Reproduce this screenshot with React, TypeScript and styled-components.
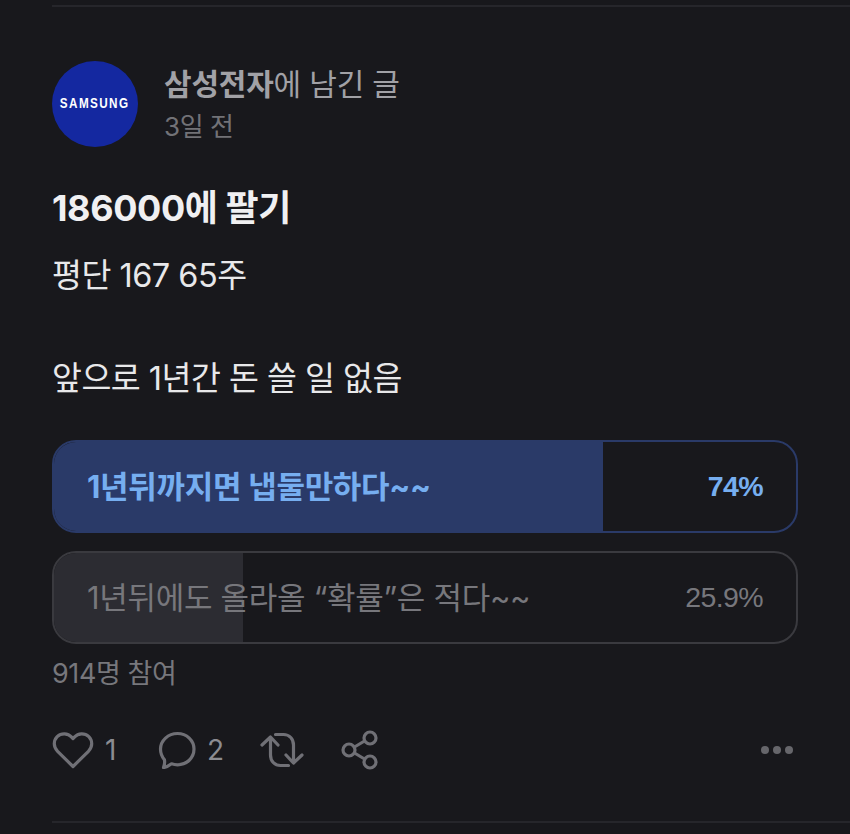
import React, { FC } from 'react';
import styled, { createGlobalStyle } from 'styled-components';

const GlobalStyle = createGlobalStyle`
  html, body {
    margin: 0;
    padding: 0;
    background: #18181c;
  }
  body {
    font-family: Inter, "Noto Sans CJK KR", sans-serif;
  }
`;

const Page = styled.div`
  width: 850px;
  height: 834px;
  box-sizing: border-box;
  overflow: hidden;
  padding: 5px 0 0 52px;
  background: #18181c;
  color: #e8e8ea;
`;

const Divider = styled.div`
  height: 2px;
  background: #26262b;
`;

const Post = styled.div`
  width: 746px;
  display: flex;
  flex-direction: column;
`;

const Header = styled.div`
  display: flex;
  gap: 26px;
  margin-top: 54px;
`;

const Avatar = styled.div`
  flex: none;
  width: 86px;
  height: 86px;
  border-radius: 50%;
  background: #1428a0;
  color: #fff;
  display: flex;
  align-items: center;
  justify-content: center;
  padding-bottom: 3px;
  box-sizing: border-box;
  font-family: "Liberation Sans", sans-serif;
  font-size: 15px;
  font-weight: 700;
  letter-spacing: 1.8px;
`;

const AvatarText = styled.span`
  display: block;
  transform: scaleX(0.78);
`;

const Meta = styled.div`
  display: flex;
  flex-direction: column;
  gap: 5px;
  padding-top: 3px;
`;

const Source = styled.div`
  font-size: 30px;
  line-height: 40px;
  letter-spacing: -0.2px;
  color: #a1a1a6;
  strong {
    font-weight: 700;
  }
`;

const Time = styled.div`
  font-size: 26px;
  line-height: 36px;
  letter-spacing: -0.4px;
  color: #727277;
`;

const Title = styled.h1`
  margin: 38px 0 0;
  font-size: 36px;
  line-height: 46px;
  font-weight: 700;
  letter-spacing: -0.4px;
  color: #f0f0f2;
`;

const Body = styled.p`
  margin: 19px 0 0;
  font-size: 32.5px;
  line-height: 51.5px;
  letter-spacing: -0.5px;
  color: #e8e8ea;
`;

const Poll = styled.div`
  display: flex;
  flex-direction: column;
  gap: 18px;
  margin-top: 35px;
`;

const Option = styled.div<{ $winner?: boolean }>`
  position: relative;
  height: 93px;
  box-sizing: border-box;
  border: 2px solid ${(p) => (p.$winner ? '#2a3a68' : '#3a3a3f')};
  border-radius: 24px;
  overflow: hidden;
  display: flex;
  align-items: center;
  justify-content: space-between;
  padding: 0 33px;
  font-weight: ${(p) => (p.$winner ? 700 : 400)};
  color: ${(p) => (p.$winner ? '#76aef0' : '#77777c')};
`;

const Fill = styled.div<{ $winner?: boolean }>`
  position: absolute;
  left: -2px;
  top: -2px;
  bottom: -2px;
  background: ${(p) => (p.$winner ? '#2a3a68' : '#2c2c32')};
`;

const OptionLabel = styled.span`
  position: relative;
  top: -2px;
  font-size: 31px;
  letter-spacing: -0.3px;
`;

const OptionPercent = styled.span`
  position: relative;
  font-family: "Liberation Sans", sans-serif;
  font-size: 28.5px;
  letter-spacing: -0.6px;
`;

const Voters = styled.div`
  margin-top: 12px;
  font-size: 27px;
  line-height: 36px;
  letter-spacing: -0.4px;
  color: #77777c;
`;

const Actions = styled.div`
  display: flex;
  align-items: center;
  margin-top: 33px;
  height: 50px;
`;

const Action = styled.div<{ $width: number }>`
  width: ${(p) => p.$width}px;
  display: flex;
  align-items: center;
  gap: 11px;
  font-size: 28px;
  color: #8c8c91;
`;

const More = styled.div`
  margin-left: auto;
  margin-right: 5px;
  display: flex;
  gap: 4px;
`;

const Dot = styled.span`
  width: 8px;
  height: 8px;
  border-radius: 50%;
  background: #66666b;
`;

const BottomDivider = styled(Divider)`
  margin-top: 46px;
`;

const Icon = styled.svg`
  flex: none;
  fill: none;
  stroke: #707076;
  stroke-width: 3.2;
  stroke-linecap: round;
  stroke-linejoin: round;
`;

const HeartIcon: FC = () => (
  <Icon width="42" height="38" viewBox="0 0 42 38">
    <path d="M21 35.5 5.6 20.4C1.2 16 1.3 9.6 5.2 5.6c3.9-3.8 10.6-3.8 14.3.4L21 7.5l1.5-1.5c3.7-4.2 10.4-4.2 14.3-.4 3.9 4 4 10.4-.4 14.8Z" />
  </Icon>
);

const CommentIcon: FC = () => (
  <Icon width="38" height="38" viewBox="0 0 38 38">
    <path d="M19.5 2.500c9.300 0 16.500 7 16.500 15.600 0 8.800-7.200 15.700-16.500 15.700-2 0-4.200-.4-6-1-2.300 1.800-5 3.300-8 3.800 1-2.500 1.400-5 1-7.700C4 26 2.500 22.400 2.500 18.100 2.500 9.500 10.200 2.500 19.500 2.500Z" />
  </Icon>
);

const RepostIcon: FC = () => (
  <Icon width="44" height="38" viewBox="0 0 44 38">
    <path d="M2 14 10.500 6 18 14M10.500 7v17c0 6 4 10.500 10 10.500h8" />
    <path d="M42 24l-8.500 8L26 24M33.500 31V14c0-6-4-10.500-10-10.500h-8" />
  </Icon>
);

const ShareIcon: FC = () => (
  <Icon width="38" height="40" viewBox="0 0 38 40">
    <circle cx="29" cy="8" r="6" />
    <circle cx="8" cy="20" r="6" />
    <circle cx="29" cy="32" r="6" />
    <path d="M13.500 17 23.500 11M13.500 23l10 6" />
  </Icon>
);

const options = [
  { text: '1년뒤까지면 냅둘만하다~~', percent: '74%', width: 74.2, winner: true },
  { text: '1년뒤에도 올라올 “확률”은 적다~~', percent: '25.9%', width: 25.7, winner: false },
];

export default function App() {
  return (
    <Page>
      <GlobalStyle />
      <Divider />
      <Post>
        <Header>
          <Avatar>
            <AvatarText>SAMSUNG</AvatarText>
          </Avatar>
          <Meta>
            <Source>
              <strong>삼성전자</strong>에 남긴 글
            </Source>
            <Time>3일 전</Time>
          </Meta>
        </Header>
        <Title>186000에 팔기</Title>
        <Body>
          평단 167 65주
          <br />
          <br />
          앞으로 1년간 돈 쓸 일 없음
        </Body>
        <Poll>
          {options.map((o) => (
            <Option key={o.text} $winner={o.winner}>
              <Fill $winner={o.winner} style={{ width: `${o.width}%` }} />
              <OptionLabel>{o.text}</OptionLabel>
              <OptionPercent>{o.percent}</OptionPercent>
            </Option>
          ))}
        </Poll>
        <Voters>914명 참여</Voters>
        <Actions>
          <Action $width={106}>
            <HeartIcon />1
          </Action>
          <Action $width={102}>
            <CommentIcon />2
          </Action>
          <Action $width={81}>
            <RepostIcon />
          </Action>
          <Action $width={40}>
            <ShareIcon />
          </Action>
          <More>
            <Dot />
            <Dot />
            <Dot />
          </More>
        </Actions>
      </Post>
      <BottomDivider />
    </Page>
  );
}
